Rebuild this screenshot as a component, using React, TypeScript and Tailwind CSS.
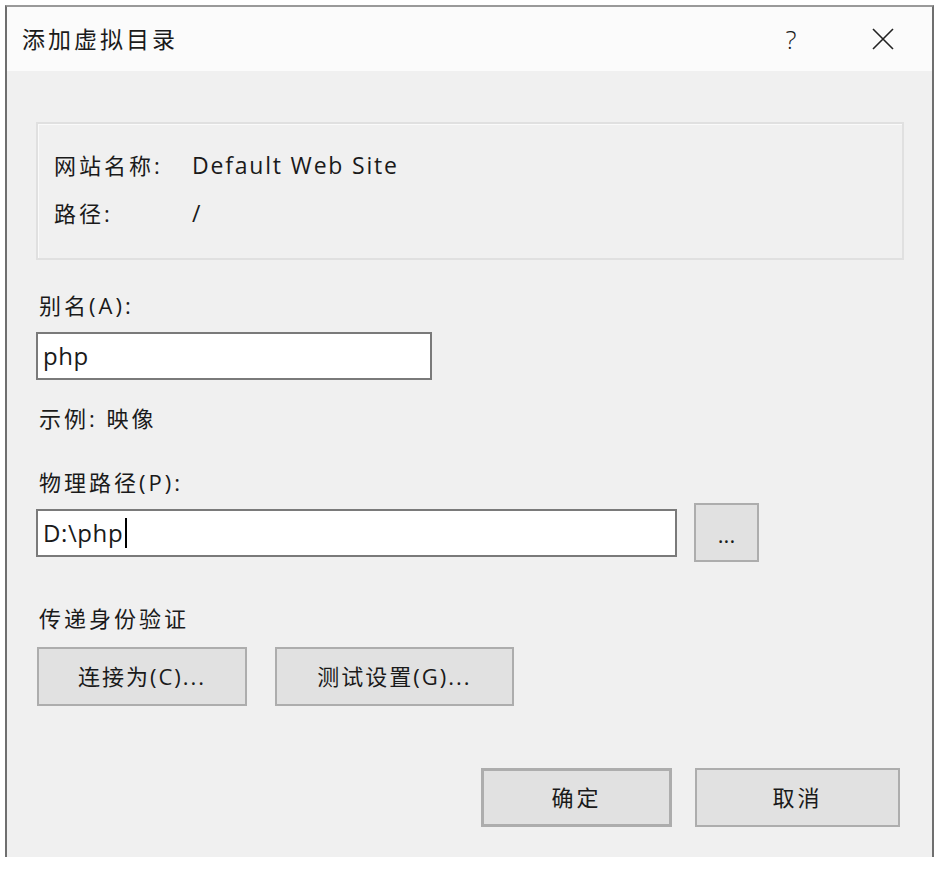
import React from "react";

const FONT = "font-['Open_Sans','Noto_Sans_CJK_SC',sans-serif]";

function Btn({ children, className = "" }: { children: React.ReactNode; className?: string }) {
  return (
    <div
      className={`flex items-center justify-center bg-[#e1e1e1] border-2 border-[#adadad] text-[22px] text-[#1a1a1a] ${className}`}
    >
      {children}
    </div>
  );
}

export default function App() {
  return (
    <div className={`w-[939px] h-[870px] bg-white overflow-hidden ${FONT} text-[#1a1a1a]`}>
      <div className="ml-[5px] mt-[5px] w-[929px] h-[852px] border-x-2 border-t-2 border-l-[#6f6f6f] border-r-[#6f6f6f] border-t-[#9a9a9a] flex flex-col">
        {/* title bar */}
        <div className="h-[64px] bg-[#fbfbfb] flex items-center pl-[15px] pr-[37px]">
          <div className="text-[23px] tracking-[3px] flex-1 pt-[1px]">添加虚拟目录</div>
          <div className="text-[26px] font-light w-[20px] text-center mr-[70px] leading-none">?</div>
          <svg width="24" height="24" viewBox="0 0 24 24" className="text-[#222]">
            <path d="M2 2 L22 22 M22 2 L2 22" stroke="currentColor" strokeWidth="1.6" fill="none" />
          </svg>
        </div>
        {/* body */}
        <div className="flex-1 bg-[#f0f0f0] pl-[29px] pr-[27px] pt-[51px] flex flex-col">
          <div className="w-[868px] h-[138px] border-2 border-[#e0e0e0] shadow-[inset_1px_1px_0_#fafafa] pt-[26px] pl-[16px] flex flex-col gap-[18px]">
            <div className="flex h-[30px] leading-[30px] text-[22px]">
              <div className="w-[138px] tracking-[3px]">网站名称:</div>
              <div className="text-[23px] tracking-[1.8px]">Default Web Site</div>
            </div>
            <div className="flex h-[30px] leading-[30px] text-[22px]">
              <div className="w-[138px] tracking-[3px]">路径:</div>
              <div className="text-[23px]">/</div>
            </div>
          </div>

          <div className="mt-[30px] pl-[3px] h-[30px] leading-[30px] text-[22px] tracking-[3px]">别名(A):</div>
          <div className="mt-[12px] w-[396px] h-[48px] bg-white border-2 border-[#7a7a7a] flex items-center pl-[5px] text-[24px] tracking-[0.6px] leading-none">
            php
          </div>

          <div className="mt-[23px] pl-[3px] h-[30px] leading-[30px] text-[22px] tracking-[3px]">示例: 映像</div>
          <div className="mt-[34px] pl-[3px] h-[30px] leading-[30px] text-[22px] tracking-[3px]">物理路径(P):</div>

          <div className="mt-[6px] flex items-center">
            <div className="w-[641px] h-[48px] bg-white border-2 border-[#7a7a7a] flex items-center pl-[5px] text-[24px] tracking-[0.6px] leading-none">
              <span>D:\php</span>
              <span className="inline-block w-[2px] h-[30px] bg-black ml-[2px]" />
            </div>
            <Btn className="ml-[17px] w-[65px] h-[59px] pt-[4px]">...</Btn>
          </div>

          <div className="mt-[41px] pl-[3px] h-[30px] leading-[30px] text-[22px] tracking-[3px]">传递身份验证</div>
          <div className="mt-[14px] flex">
            <Btn className="ml-[1px] w-[210px] h-[59px] tracking-[2px]">连接为(C)...</Btn>
            <Btn className="ml-[28px] w-[239px] h-[59px] tracking-[2px]">测试设置(G)...</Btn>
          </div>

          <div className="mt-[62px] flex justify-end pr-[5px]">
            <Btn className="w-[191px] h-[59px] border-[3px] border-[#555] tracking-[3px]">确定</Btn>
            <Btn className="ml-[23px] w-[205px] h-[59px] tracking-[3px]">取消</Btn>
          </div>
        </div>
      </div>
    </div>
  );
}
